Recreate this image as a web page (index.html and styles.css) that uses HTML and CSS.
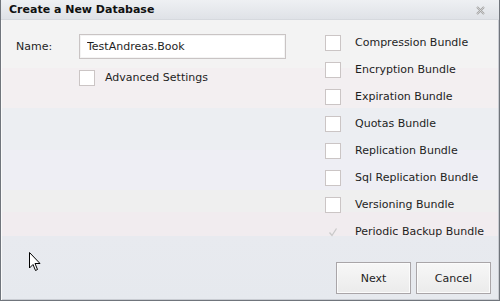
FILE: index.html
```
<!DOCTYPE html>
<html lang="en">
<head>
  <meta charset="UTF-8">
  <title>Create a New Database</title>
  <link rel="stylesheet" href="styles.css">
</head>
<body>
  <div class="dialog">
    <div class="titlebar">
      <span class="title">Create a New Database</span>
      <svg class="close" width="9" height="9" viewBox="0 0 9 9">
        <path d="M1 1 L8 8 M8 1 L1 8" stroke="#a4a4a4" stroke-width="2" fill="none"/>
        <path d="M1 1 L8 8 M8 1 L1 8" stroke="#e8e8e8" stroke-width="0.6" fill="none"/>
      </svg>
    </div>

    <div class="content">
      <div class="left">
        <div class="field">
          <label for="name">Name:</label>
          <input type="text" id="name" value="TestAndreas.Book">
        </div>
        <div class="check adv">
          <span class="box"></span>
          <span>Advanced Settings</span>
        </div>
      </div>

      <div class="bundles">
        <div class="check"><span class="box"></span><span>Compression Bundle</span></div>
        <div class="check"><span class="box"></span><span>Encryption Bundle</span></div>
        <div class="check"><span class="box"></span><span>Expiration Bundle</span></div>
        <div class="check"><span class="box"></span><span>Quotas Bundle</span></div>
        <div class="check"><span class="box"></span><span>Replication Bundle</span></div>
        <div class="check"><span class="box"></span><span>Sql Replication Bundle</span></div>
        <div class="check"><span class="box"></span><span>Versioning Bundle</span></div>
        <div class="check">
          <span class="box disabled">
            <svg width="14" height="14" viewBox="0 0 14 14"><path d="M3.5 7.5 L6 10.5 L10.5 3.5" stroke="#c9c9c9" stroke-width="1.3" fill="none"/></svg>
          </span>
          <span>Periodic Backup Bundle</span>
        </div>
      </div>
    </div>

    <div class="footer">
      <button type="button">Next</button>
      <button type="button">Cancel</button>
    </div>

    <!-- mouse pointer captured in the screenshot -->
    <svg class="cursor" width="12" height="20" viewBox="0 0 12 20">
      <path d="M0.5 0.5 L0.5 16 L4 12.5 L6.5 18.5 L8.5 17.5 L6 11.5 L11 11.5 Z" fill="#fff" stroke="#000" stroke-width="1"/>
    </svg>
  </div>
</body>
</html>
```

FILE: styles.css
```
html, body {
  margin: 0;
  padding: 0;
}
body {
  font-family: "DejaVu Sans", Verdana, sans-serif;
  font-size: 11px;
  color: #1e1e1e;
}
.dialog {
  position: relative;
  width: 500px;
  height: 301px;
  box-sizing: border-box;
  border: 1px solid #70757c;
  border-top: none;
  box-shadow: inset 1px 0 0 #fafafa, inset -1px -1px 0 #c9ccd2;
  background: linear-gradient(to bottom,
    #f3f3f3 0, #f3f3f3 68px,
    #f3eff1 68px, #f3eff1 108px,
    #eceef2 108px, #eceef2 150px,
    #eeeef4 150px, #eeeef4 190px,
    #efefef 190px, #efefef 212px,
    #f1ecef 212px, #f1ecef 236px,
    #e8eaef 236px, #e6e9ee 100%);
  display: flex;
  flex-direction: column;
}
.titlebar {
  height: 20px;
  display: flex;
  align-items: center;
  justify-content: space-between;
  padding: 0 14px 0 8px;
  background: linear-gradient(to bottom, #eef0f3, #dfe2e7);
  border-bottom: 1px solid #d6d9de;
  box-sizing: border-box;
}
.title {
  font-weight: bold;
  font-size: 11px;
  color: #111;
}
.close {
  margin-top: 2px;
}
.content {
  display: flex;
  padding: 14px 0 0 15px;
}
.left {
  width: 309px;
}
.field {
  display: flex;
  align-items: center;
}
.field label {
  width: 63px;
}
.field input {
  width: 207px;
  height: 25px;
  box-sizing: border-box;
  border: 1px solid #c9c4c4;
  box-shadow: inset 0 0 0 1px #f4f4f4;
  padding: 0 7px;
  font: inherit;
  color: #1e1e1e;
  background: #fff;
  outline: none;
}
.check {
  display: flex;
  align-items: center;
  height: 27px;
}
.check .box {
  width: 16px;
  height: 16px;
  box-sizing: border-box;
  border: 1px solid #cbc5c5;
  background: #fff;
  margin-right: 14px;
  display: flex;
  align-items: center;
  justify-content: center;
}
.check .box.disabled {
  border-color: transparent;
  background: transparent;
}
.adv {
  margin: 5px 0 0 63px;
}
.adv .box {
  margin-right: 10px;
}
.bundles {
  display: flex;
  flex-direction: column;
  margin-top: -5px;
}
.footer {
  margin-top: auto;
  display: flex;
  justify-content: flex-end;
  gap: 5px;
  padding: 0 8px 6px 0;
}
.footer button {
  width: 75px;
  height: 32px;
  font: inherit;
  color: #1e1e1e;
  border: 1px solid #a9a5a8;
  box-shadow: inset 0 0 0 1px #fbfbfb;
  background: linear-gradient(to bottom, #f7f7f7, #ebebeb);
  border-radius: 0;
}
.cursor {
  position: absolute;
  left: 28px;
  top: 252px;
}
```
